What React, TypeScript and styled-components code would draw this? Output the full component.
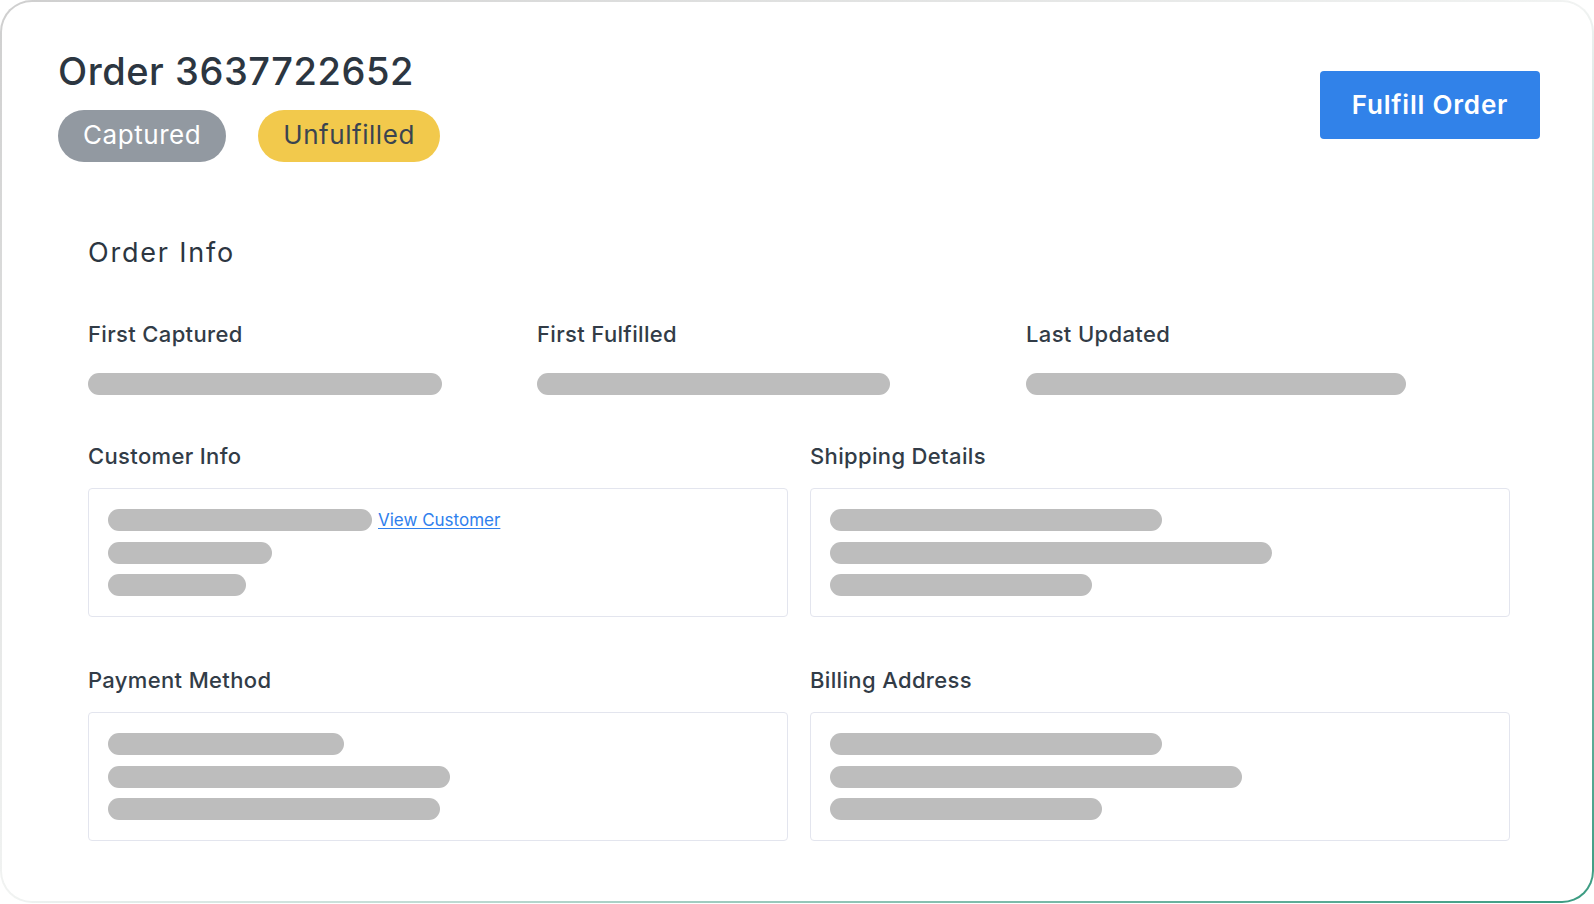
import React from "react";
import styled, { createGlobalStyle } from "styled-components";

const GlobalStyle = createGlobalStyle`
  html, body {
    margin: 0;
    padding: 0;
    background: #ffffff;
  }
  body {
    font-family: "Inter", "Liberation Sans", sans-serif;
    color: #2c3641;
  }
`;

const Frame = styled.div`
  width: 1594px;
  height: 903px;
  box-sizing: border-box;
  padding: 2px;
  border-radius: 32px;
  background: linear-gradient(to bottom right, #cfcfcf 0%, #f1f3f2 50%, #3a9b81 100%);
`;

const Card = styled.div`
  height: 100%;
  box-sizing: border-box;
  background: #ffffff;
  border-radius: 30px;
  padding: 46px 52px 0 56px;
  display: flex;
  flex-direction: column;
`;

const Header = styled.header`
  display: flex;
  justify-content: space-between;
  align-items: flex-start;
`;

const TitleBlock = styled.div`
  display: flex;
  flex-direction: column;
  gap: 16px;
`;

const Title = styled.h1`
  margin: 0;
  font-size: 38px;
  line-height: 46px;
  font-weight: 500;
  letter-spacing: 0.55px;
  color: #2c3641;
`;

const Badges = styled.div`
  display: flex;
  gap: 32px;
`;

const Badge = styled.span<{ $tone: "gray" | "yellow" }>`
  display: inline-flex;
  align-items: center;
  box-sizing: border-box;
  height: 52px;
  padding: 0 25px 3px;
  border-radius: 26px;
  font-size: 26px;
  font-weight: 400;
  letter-spacing: 0.55px;
  background: ${(p) => (p.$tone === "gray" ? "#9299a1" : "#f2c94c")};
  color: ${(p) => (p.$tone === "gray" ? "#ffffff" : "#3a4450")};
`;

const PrimaryButton = styled.button`
  margin-top: 23px;
  width: 220px;
  height: 68px;
  border: none;
  border-radius: 4px;
  background: #3182e9;
  color: #ffffff;
  font-family: "Inter", "Liberation Sans", sans-serif;
  font-size: 26px;
  font-weight: 600;
  letter-spacing: 0.8px;
  padding: 0 0 2px;
  cursor: pointer;
`;

const Section = styled.section`
  padding: 75px 30px 0 30px;
  display: flex;
  flex-direction: column;
`;

const SectionTitle = styled.h2`
  margin: 0;
  font-size: 27px;
  line-height: 32px;
  font-weight: 400;
  letter-spacing: 1.8px;
  color: #2c3641;
`;

const StatsRow = styled.div`
  margin-top: 51px;
  display: grid;
  grid-template-columns: 449px 489px 1fr;
`;

const Field = styled.div`
  display: flex;
  flex-direction: column;
`;

const Label = styled.div`
  font-size: 22px;
  line-height: 28px;
  font-weight: 500;
  letter-spacing: 0.35px;
  color: #323c47;
`;

const Bar = styled.div<{ $w: number }>`
  width: ${(p) => p.$w}px;
  height: 22px;
  border-radius: 11px;
  background: #bdbdbd;
  flex: none;
`;

const StatBar = styled(Bar)`
  margin-top: 25px;
`;

const DetailsGrid = styled.div`
  margin-top: 47px;
  display: grid;
  grid-template-columns: 700px 700px;
  column-gap: 22px;
  row-gap: 49px;
`;

const Box = styled.div`
  margin-top: 18px;
  border: 1px solid #e3e5ee;
  border-radius: 4px;
  padding: 20px 19px;
  display: flex;
  flex-direction: column;
  gap: 10.5px;
`;

const Line = styled.div`
  display: flex;
  align-items: center;
  gap: 6px;
  height: 22px;
`;

const Link = styled.a`
  font-size: 17px;
  line-height: 22px;
  color: #2f80ed;
  text-decoration: underline;
  text-underline-offset: 2px;
  cursor: pointer;
`;

type Detail = { label: string; bars: number[]; link?: string };

const details: Detail[] = [
  { label: "Customer Info", bars: [264, 164, 138], link: "View Customer" },
  { label: "Shipping Details", bars: [332, 442, 262] },
  { label: "Payment Method", bars: [236, 342, 332] },
  { label: "Billing Address", bars: [332, 412, 272] },
];

const stats = [
  { label: "First Captured", w: 354 },
  { label: "First Fulfilled", w: 353 },
  { label: "Last Updated", w: 380 },
];

export default function App() {
  return (
    <>
      <GlobalStyle />
      <Frame>
        <Card>
          <Header>
            <TitleBlock>
              <Title>Order 3637722652</Title>
              <Badges>
                <Badge $tone="gray">Captured</Badge>
                <Badge $tone="yellow">Unfulfilled</Badge>
              </Badges>
            </TitleBlock>
            <PrimaryButton>Fulfill Order</PrimaryButton>
          </Header>
          <Section>
            <SectionTitle>Order Info</SectionTitle>
            <StatsRow>
              {stats.map((s) => (
                <Field key={s.label}>
                  <Label>{s.label}</Label>
                  <StatBar $w={s.w} />
                </Field>
              ))}
            </StatsRow>
            <DetailsGrid>
              {details.map((d) => (
                <Field key={d.label}>
                  <Label>{d.label}</Label>
                  <Box>
                    {d.bars.map((w, i) => (
                      <Line key={i}>
                        <Bar $w={w} />
                        {i === 0 && d.link ? <Link>{d.link}</Link> : null}
                      </Line>
                    ))}
                  </Box>
                </Field>
              ))}
            </DetailsGrid>
          </Section>
        </Card>
      </Frame>
    </>
  );
}
